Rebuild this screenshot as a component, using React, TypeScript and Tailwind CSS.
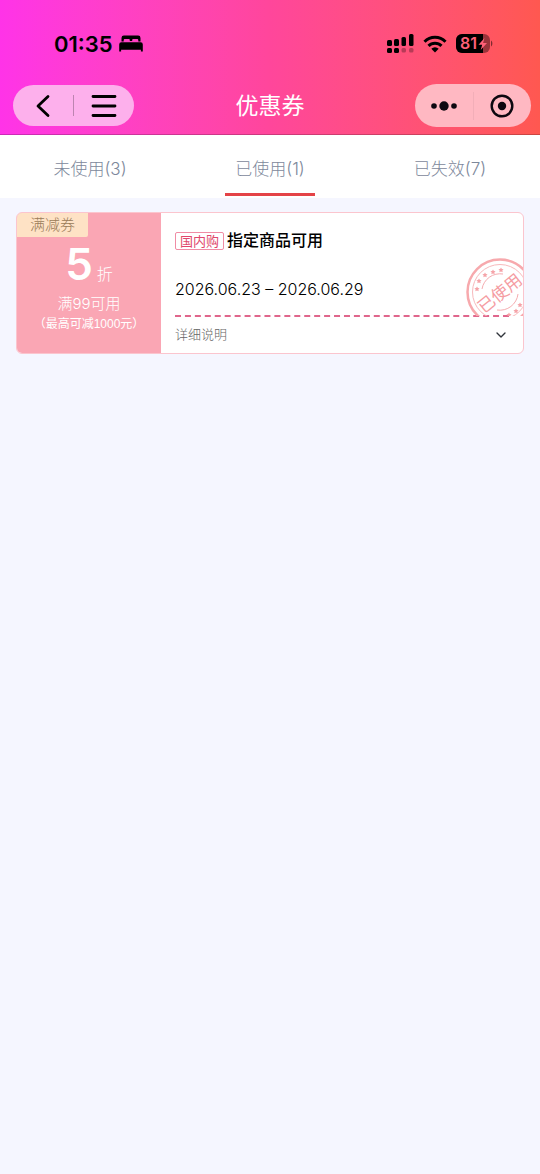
import { ChevronDown } from "lucide-react";

const tabs = [
  { label: "未使用(3)", active: false },
  { label: "已使用(1)", active: true },
  { label: "已失效(7)", active: false },
];

function BedIcon() {
  return (
    <svg width="24" height="17" viewBox="0 0 24 17" aria-hidden="true">
      <path d="M2.500 6.500V3A2.400 2.400 0 0 1 4.900.6h14.200A2.400 2.400 0 0 1 21.500 3v3.500h-2.200V5.400c0-.8-.5-1.300-1.300-1.300h-3.700c-.7 0-1.100.5-1.100 1.100v.8h-2.400v-.8c0-.6-.4-1.100-1.100-1.100H6c-.8 0-1.300.5-1.300 1.300v1.100z" />
      <path d="M2.300 7.300h19.400A2.100 2.100 0 0 1 23.800 9.400V16.500h-1.900v-1.800H2.100v1.800H.2V9.400A2.100 2.100 0 0 1 2.300 7.300z" />
    </svg>
  );
}

function SignalIcon() {
  return (
    <svg width="27" height="19" viewBox="0 0 27 19" aria-hidden="true">
      <rect x="0" y="6" width="5" height="6" rx="1.500" />
      <rect x="7" y="5" width="5" height="7" rx="1.500" />
      <rect x="14.500" y="3" width="4.500" height="9" rx="1.500" />
      <rect x="22" y="0" width="4.500" height="12" rx="1.500" />
      <rect x="0" y="14" width="5" height="5" rx="1.500" />
      <rect x="7" y="14" width="5" height="5" rx="1.500" />
      <rect x="14.500" y="14" width="4.500" height="4.500" rx="1.500" opacity=".28" />
      <rect x="22" y="14" width="4.500" height="4.500" rx="1.500" opacity=".28" />
    </svg>
  );
}

function WifiIcon() {
  return (
    <svg width="24" height="18" viewBox="0 0 24 18" aria-hidden="true">
      <g fill="none" stroke="#000" strokeWidth="3">
        <path d="M1.500 6.700a14.800 14.800 0 0 1 21 0" />
        <path d="M5.500 10.900a9.200 9.200 0 0 1 13 0" />
      </g>
      <path d="M12 17.500l-3.700-3.700a5.300 5.300 0 0 1 7.400 0z" />
    </svg>
  );
}

function Battery() {
  return (
    <svg width="37" height="19" viewBox="0 0 37 19" aria-label="81%" role="img">
      <defs>
        <clipPath id="battery-body">
          <rect x="0" y="0" width="34" height="19" rx="6" />
        </clipPath>
      </defs>
      <g clipPath="url(#battery-body)">
        <rect width="34" height="19" fill="#000" opacity=".4" />
        <rect width="27" height="19" fill="#000" />
      </g>
      <path d="M35 6.500c1.800.8 1.800 5.200 0 6z" opacity=".5" />
      <text x="4" y="15" fill="#ff6078" fontSize="16" fontWeight="600" fontFamily="Inter, sans-serif">81</text>
      <path d="M28.500 4l-6 6.800h3.700L24.700 16l6.300-7h-3.900z" fill="#ff6078" />
    </svg>
  );
}

const stampStars = [
  [11, 31], [13, 23], [19, 17], [27, 14], [35, 12],
  [54, 47], [50, 53], [43, 57],
];

function UsedStamp() {
  return (
    <svg width="68" height="68" viewBox="0 0 68 68" fill="none" className="shrink-0" aria-label="已使用" role="img">
      <circle cx="34" cy="34" r="32.500" stroke="#f7a9ad" strokeWidth="2.500" />
      <circle cx="34" cy="34" r="27.500" stroke="#f7b9bc" strokeWidth="1" />
      <path d="M16 31A18.300 18.300 0 0 1 37 16M52 36A18.300 18.300 0 0 1 31 52" stroke="#f5acb0" />
      {stampStars.map(([x, y]) => (
        <path
          key={`${x}-${y}`}
          d="M0-2.600L.9-.9 2.600-.8 1.300.5 1.700 2.300 0 1.400-1.700 2.300-1.300.5-2.600-.8-.9-.9z"
          fill="#f5a3a8"
          transform={`translate(${x} ${y})`}
        />
      ))}
      <text
        x="33"
        y="41"
        textAnchor="middle"
        fontSize="17"
        fontFamily="'Noto Sans CJK SC', sans-serif"
        fill="#f59ca2"
        transform="rotate(-39 34 34)"
      >
        已使用
      </text>
    </svg>
  );
}

export default function App() {
  return (
    <div className="min-h-screen bg-[#f5f6ff] font-['Inter','Noto_Sans_CJK_SC',sans-serif] text-black">
      <header className="border-b border-black/20 bg-linear-to-r from-[#ff33e8] via-[#ff469b] to-[#ff5850]">
        <div className="flex h-21 items-center justify-between pt-[3px] pr-[47px] pl-[54px]">
          <div className="flex items-center gap-1.5">
            <span className="text-[22px] leading-7 font-semibold">01:35</span>
            <BedIcon />
          </div>
          <div className="flex items-center gap-[9px]">
            <SignalIcon />
            <WifiIcon />
            <Battery />
          </div>
        </div>
        <div className="grid grid-cols-[1fr_auto_1fr] items-center px-[9px] pb-[7px]">
          <div className="ml-1 flex h-[41px] w-[121px] items-center rounded-full bg-[#fdb0ec]">
            <button aria-label="返回" className="flex flex-1 justify-center">
              <svg width="14" height="24" viewBox="0 0 14 24" fill="none" stroke="#000" strokeWidth="2.800" strokeLinecap="round" strokeLinejoin="round">
                <path d="M12 2.500L2 12l10 9.500" />
              </svg>
            </button>
            <span className="h-[21px] w-px bg-black/25" />
            <button aria-label="菜单" className="flex flex-1 justify-center">
              <svg width="26" height="24" viewBox="0 0 26 24" stroke="#000" strokeWidth="2.800" strokeLinecap="round">
                <path d="M2 2.500h22M2 12h22M2 21.500h22" />
              </svg>
            </button>
          </div>
          <h1 className="text-[23px] leading-8 font-normal text-white">优惠券</h1>
          <div className="flex h-[43px] w-[116px] items-center justify-self-end rounded-full bg-[#ffb8c2]">
            <button aria-label="更多" className="flex flex-1 justify-center">
              <svg width="26" height="10" viewBox="0 0 26 10" fill="#0d0810">
                <circle cx="3" cy="5" r="2.800" />
                <circle cx="13" cy="5" r="4.700" />
                <circle cx="23" cy="5" r="2.800" />
              </svg>
            </button>
            <span className="h-7 w-px bg-black/5" />
            <button aria-label="关闭" className="flex flex-1 justify-center">
              <svg width="24" height="24" viewBox="0 0 24 24" fill="none">
                <circle cx="12" cy="12" r="10.300" stroke="#0d0810" strokeWidth="2.400" />
                <circle cx="12" cy="12" r="4.200" fill="#0d0810" />
              </svg>
            </button>
          </div>
        </div>
      </header>

      <nav className="grid h-[63px] grid-cols-3 bg-white">
        {tabs.map((tab) => (
          <button key={tab.label} className="flex flex-col items-center text-[17px] font-light text-[#7d889b]">
            <span className="flex flex-1 items-center pt-3">{tab.label}</span>
            <span className={tab.active ? "mb-0.5 h-[3px] w-1/2 bg-[#e44347]" : "mb-0.5 h-[3px] w-1/2"} />
          </button>
        ))}
      </nav>

      <main className="px-4 pt-3.5">
        <article className="flex overflow-hidden rounded-md border border-[#fbc5ce] bg-white">
          <div className="flex w-36 shrink-0 flex-col items-center bg-[#faa6b4] pb-4 text-white">
            <span className="self-start rounded-br-xs bg-[#fee2c5] px-[13px] text-[15px] leading-6 font-light text-[#9a7b58]">
              满减券
            </span>
            <p className="flex items-baseline gap-1">
              <span className="text-[44px] leading-[55px] font-semibold">5</span>
              <span className="text-base font-light">折</span>
            </p>
            <p className="text-[15px] leading-6 font-light">满99可用</p>
            <p className="font-['Liberation_Sans','Noto_Sans_CJK_SC',sans-serif] text-xs leading-4">（最高可减1000元）</p>
          </div>

          <div className="relative flex min-w-0 flex-1 flex-col">
            <div className="mx-3.5 border-b-2 border-dashed border-[#e0668c]">
              <div className="flex items-center gap-[3px] pt-[15px]">
                <span className="mt-0.5 rounded-xs border border-[#f08ca5] px-1 text-[13px] leading-4 text-[#e0476c]">
                  国内购
                </span>
                <h2 className="text-base leading-6 font-medium">指定商品可用</h2>
              </div>
              <p className="pt-[23px] pb-3 text-base leading-7 font-light">2026.06.23 – 2026.06.29</p>
            </div>
            <button className="flex h-9 items-center justify-between px-3.5 text-[13px] font-light text-[#666666]">
              详细说明
              <ChevronDown size={16} strokeWidth={2} className="text-[#30343b]" />
            </button>
            <div className="pointer-events-none absolute top-[45px] right-0 h-[58px] w-[57px] overflow-hidden">
              <UsedStamp />
            </div>
          </div>
        </article>
      </main>
    </div>
  );
}
